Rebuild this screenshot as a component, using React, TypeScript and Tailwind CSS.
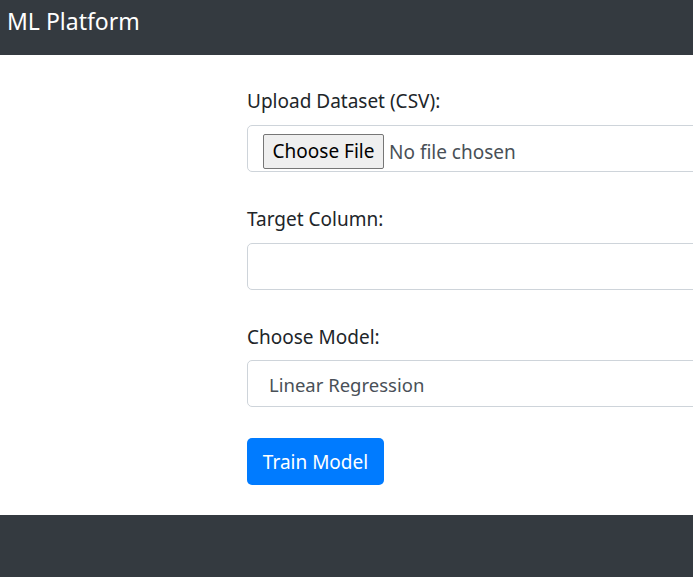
const font = { fontFamily: '"Noto Sans", "Open Sans", sans-serif' };

function Label({ children }: { children: string }) {
  return <label className="block h-[30px] leading-[30px] text-[19px] text-[#212529]">{children}</label>;
}

export default function App() {
  return (
    <div className="min-h-[577px] w-[693px] overflow-hidden bg-white flex flex-col" style={font}>
      <header className="h-[55px] bg-[#343a40] pl-[7px] flex items-start">
        <span className="text-white text-[23px] leading-[42px]">ML Platform</span>
      </header>

      <main className="pl-[247px] pt-[31px] pb-[30px] flex flex-col">
        <Label>Upload Dataset (CSV):</Label>
        <div className="mt-[9px] w-[520px] h-[47px] border border-[#ced4da] rounded-[5px] flex items-start pt-[8px] pl-[15px]">
          <span className="h-[35px] w-[121px] shrink-0 flex items-center justify-center bg-[#efefef] border border-[#767676] rounded-[2px] text-[19px] text-black">
            Choose File
          </span>
          <span className="ml-[5px] leading-[37px] text-[19px] text-[#495057]">No file chosen</span>
        </div>

        <div className="mt-[32px]">
          <Label>Target Column:</Label>
        </div>
        <div className="mt-[9px] w-[520px] h-[47px] border border-[#ced4da] rounded-[5px]" />

        <div className="mt-[32px]">
          <Label>Choose Model:</Label>
        </div>
        <div className="mt-[8px] w-[520px] h-[47px] border border-[#ced4da] rounded-[5px] flex items-center pl-[21px] pt-[3px]">
          <span className="text-[18.5px] text-[#495057]">Linear Regression</span>
        </div>

        <button className="mt-[31px] self-start w-[137px] h-[47px] bg-[#007bff] rounded-[5px] text-white text-[19px] pt-[2px]">
          Train Model
        </button>
      </main>

      <footer className="flex-1 bg-[#343a40]" />
    </div>
  );
}
